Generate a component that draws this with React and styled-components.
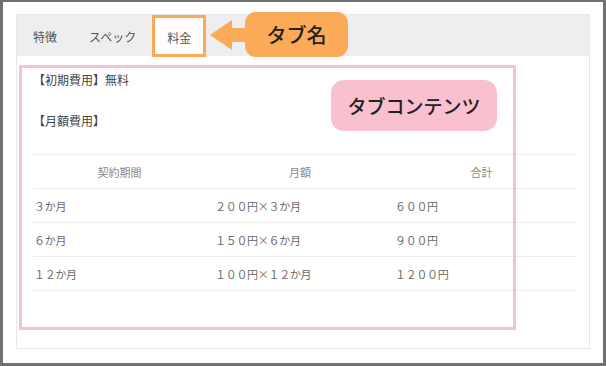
import React from 'react'
import styled, { createGlobalStyle } from 'styled-components'

const orange = '#fbaa57'
const pink = '#f5c3cf'

const GlobalStyle = createGlobalStyle`
  body {
    margin: 0;
    font-family: "Noto Sans CJK JP", "Noto Sans", sans-serif;
  }
`

const Frame = styled.div`
  width: 606px;
  height: 366px;
  box-sizing: border-box;
  border: 3px solid #717171;
  border-top-width: 2px;
  background: #fff;
  padding: 12px 13px;
`

const Panel = styled.div`
  position: relative;
  width: 574px;
  height: 335px;
  box-sizing: border-box;
  border: 1px solid #e8e8e8;
  background: #fff;
`

const TabBar = styled.div`
  display: flex;
  align-items: flex-start;
  height: 41px;
  background: #eeeeee;
`

const Tab = styled.div`
  display: flex;
  align-items: center;
  box-sizing: border-box;
  height: ${p => (p.$active ? '42px' : '41px')};
  padding: ${p => (p.$active ? '2px 12px 0' : '2px 16px 0')};
  font-size: 12px;
  color: #555;
  background: ${p => (p.$active ? '#fff' : 'transparent')};
  border: ${p => (p.$active ? `3px solid ${orange}` : 'none')};
`

const TabNote = styled.div`
  position: absolute;
  left: 193px;
  top: -3px;
  display: flex;
  align-items: center;
`

const NoteLabel = styled.div`
  display: flex;
  align-items: center;
  justify-content: center;
  width: ${p => p.$w}px;
  height: ${p => p.$h}px;
  border-radius: ${p => p.$r}px;
  background: ${p => p.$bg};
  font-size: ${p => p.$size}px;
  font-weight: 500;
  color: #222;
`

const Content = styled.div`
  padding: 15px 14px 0 16px;
`

const InfoLine = styled.p`
  margin: 0 0 23px;
  font-size: 12px;
  line-height: 18px;
  color: #444;
`

const PriceTable = styled.table`
  width: 544px;
  margin-top: 24px;
  table-layout: fixed;
  border-collapse: collapse;
  font-size: 11px;
  tr:last-child td {
    border-bottom: 1px solid #ececec;
  }
`

const Th = styled.th`
  box-sizing: border-box;
  width: ${p => p.$w}px;
  height: 34px;
  padding: 0 8px 0 0;
  border-top: 1px solid #ececec;
  font-weight: normal;
  color: #888;
  text-align: center;
`

const Td = styled.td`
  height: 33px;
  padding: 0 0 0 1px;
  border-top: 1px solid #ececec;
  color: #6a6a6a;
  letter-spacing: -0.3px;
`

const ContentMark = styled.div`
  position: absolute;
  left: 2px;
  top: 50px;
  width: 497px;
  height: 265px;
  box-sizing: border-box;
  border: 3px solid ${pink};
  pointer-events: none;
`

const ContentNote = styled.div`
  position: absolute;
  top: 12px;
  right: 16px;
`

const rows = [
  ['３か月', '２００円×３か月', '６００円'],
  ['６か月', '１５０円×６か月', '９００円'],
  ['１２か月', '１００円×１２か月', '１２００円'],
]

const App = () => {
  return (
    <Frame>
      <GlobalStyle />
      <Panel>
        <TabBar>
          <Tab>特徴</Tab>
          <Tab>スペック</Tab>
          <Tab $active>料金</Tab>
        </TabBar>
        <TabNote>
          <svg width="38" height="32" viewBox="0 0 38 32" style={{ marginRight: -3 }}>
            <polygon points="0,16 22,1 22,31" fill={orange} />
            <rect x="21" y="9" width="17" height="14" fill={orange} />
          </svg>
          <NoteLabel $w={103} $h={45} $r={11} $bg={orange} $size={20}>タブ名</NoteLabel>
        </TabNote>
        <Content>
          <InfoLine>【初期費用】無料</InfoLine>
          <InfoLine>【月額費用】</InfoLine>
          <PriceTable>
            <thead>
              <tr>
                <Th $w={181}>契約期間</Th>
                <Th $w={180}>月額</Th>
                <Th $w={183}>合計</Th>
              </tr>
            </thead>
            <tbody>
              {rows.map(r => (
                <tr key={r[0]}>
                  <Td>{r[0]}</Td>
                  <Td>{r[1]}</Td>
                  <Td>{r[2]}</Td>
                </tr>
              ))}
            </tbody>
          </PriceTable>
        </Content>
        <ContentMark>
          <ContentNote>
            <NoteLabel $w={166} $h={51} $r={13} $bg="#f9c0cf" $size={19}>タブコンテンツ</NoteLabel>
          </ContentNote>
        </ContentMark>
      </Panel>
    </Frame>
  )
}

export default App
